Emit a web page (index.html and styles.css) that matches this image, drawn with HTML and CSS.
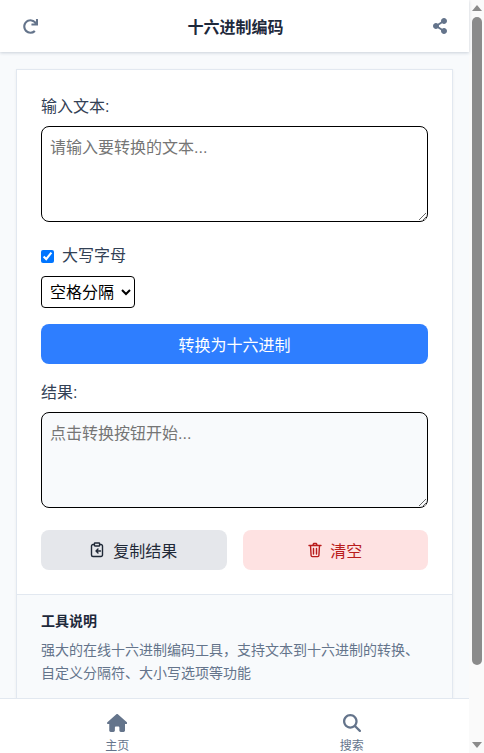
FILE: index.html
```html
<!DOCTYPE html>
<html lang="zh-CN">
<head>
<meta charset="utf-8">
<title>十六进制编码</title>
<link rel="stylesheet" href="styles.css">
</head>
<body>
<div class="page">
  <header class="topbar">
    <svg class="top-icon" viewBox="0 0 512 512"><path d="M500.33 0h-47.41a12 12 0 0 0-12 12.57l4 82.76A247.42 247.42 0 0 0 256 8C119.34 8 7.9 119.53 8 256.19 8.1 393.07 119.1 504 256 504a247.1 247.1 0 0 0 166.18-63.91 12 12 0 0 0 .48-17.43l-34-34a12 12 0 0 0-16.38-.55A176 176 0 1 1 402.1 157.8l-101.53-4.87a12 12 0 0 0-12.57 12v47.41a12 12 0 0 0 12 12h200.33a12 12 0 0 0 12-12V12a12 12 0 0 0-12-12z"/></svg>
    <h1 class="title">十六进制编码</h1>
    <svg class="top-icon share" viewBox="0 0 448 512"><path d="M352 320c-22.608 0-43.387 7.819-59.79 20.895l-102.486-64.054a96.551 96.551 0 0 0 0-41.683l102.486-64.054C308.613 184.181 329.392 192 352 192c53.019 0 96-42.981 96-96S405.019 0 352 0s-96 42.981-96 96c0 7.158.79 14.13 2.276 20.841L155.79 180.895C139.387 167.819 118.608 160 96 160c-53.019 0-96 42.981-96 96s42.981 96 96 96c22.608 0 43.387-7.819 59.79-20.895l102.486 64.054A96.301 96.301 0 0 0 256 416c0 53.019 42.981 96 96 96s96-42.981 96-96-42.981-96-96-96z"/></svg>
  </header>
  <main class="main">
    <section class="card">
      <div class="tool">
        <label class="label" for="input">输入文本:</label>
        <textarea id="input" class="area" placeholder="请输入要转换的文本..."></textarea>
        <label class="check"><input type="checkbox" checked><span>大写字母</span></label>
        <select class="select"><option>空格分隔</option></select>
        <button class="btn primary">转换为十六进制</button>
        <label class="label result-label" for="output">结果:</label>
        <textarea id="output" class="area readonly" readonly placeholder="点击转换按钮开始..."></textarea>
        <div class="actions">
          <button class="btn gray">
            <svg class="btn-icon" viewBox="0 0 14 16"><path d="M4.500 2.500H3a1.500 1.500 0 0 0-1.500 1.500v9A1.500 1.500 0 0 0 3 14.500h8a1.500 1.500 0 0 0 1.500-1.500V4A1.500 1.500 0 0 0 11 2.500H9.500M5 1h4a.6.600 0 0 1 .6.600v1.800a.6.600 0 0 1-.6.600H5a.6.600 0 0 1-.6-.6V1.600A.6.600 0 0 1 5 1ZM10.500 9H6M8 7 6 9l2 2"/></svg>
            <span>复制结果</span>
          </button>
          <button class="btn danger">
            <svg class="btn-icon" viewBox="0 0 14 16"><path d="M1 3.500h12M4.800 3.500l.8-2h2.800l.8 2M2.500 3.500l.6 10a1.200 1.200 0 0 0 1.200 1.100h5.400a1.200 1.200 0 0 0 1.200-1.100l.6-10M5.500 6.500v5.500M8.500 6.500v5.500"/></svg>
            <span>清空</span>
          </button>
        </div>
      </div>
      <div class="about">
        <h2 class="about-title">工具说明</h2>
        <p class="about-text">强大的在线十六进制编码工具，支持文本到十六进制的转换、自定义分隔符、大小写选项等功能</p>
      </div>
    </section>
  </main>
  <nav class="bottom">
    <a class="tab">
      <svg class="tab-icon home" viewBox="0 0 576 512"><path d="M575.8 255.5c0 18-15 32.100-32 32.100h-32l.7 160.200c0 2.700-.2 5.400-.5 8.100V472c0 22.100-17.900 40-40 40H456c-1.100 0-2.200 0-3.300-.1c-1.400 .1-2.800 .1-4.200 .1H416 392c-22.100 0-40-17.900-40-40V448 384c0-17.700-14.300-32-32-32H256c-17.700 0-32 14.300-32 32v64 24c0 22.100-17.900 40-40 40H160 128.100c-1.500 0-3-.1-4.500-.2c-1.200 .1-2.400 .2-3.600 .2H104c-22.100 0-40-17.900-40-40V360c0-.9 0-1.900 .1-2.800V287.600H32c-18 0-32-14-32-32.100c0-9 3-17 10-24L266.400 8c7-7 15-8 22-8s15 2 21 7L564.800 231.500c8 7 12 15 11 24z"/></svg>
      <span>主页</span>
    </a>
    <a class="tab">
      <svg class="tab-icon" viewBox="0 0 512 512"><path d="M416 208c0 45.900-14.900 88.300-40 122.700L502.600 457.400c12.500 12.500 12.500 32.800 0 45.300s-32.800 12.500-45.300 0L330.700 376c-34.400 25.200-76.800 40-122.700 40C93.100 416 0 322.900 0 208S93.100 0 208 0S416 93.100 416 208zM208 352a144 144 0 1 0 0-288 144 144 0 1 0 0 288z"/></svg>
      <span>搜索</span>
    </a>
  </nav>
</div>
<aside class="scrollbar">
  <span class="arrow up"></span>
  <span class="thumb"></span>
  <span class="track"></span>
  <span class="arrow down"></span>
</aside>
</body>
</html>
```
FILE: styles.css
```css
* { box-sizing: border-box; }
html, body { height: 100%; }
body {
  margin: 0;
  display: flex;
  overflow: hidden;
  background: #f8fafc;
  color: #334155;
  font-family: "Liberation Sans", "Noto Sans CJK SC", sans-serif;
  font-size: 16px;
}
.page {
  flex: 1;
  min-width: 0;
  height: 100vh;
  display: flex;
  flex-direction: column;
}
.topbar {
  flex: none;
  height: 52px;
  padding: 0 22px 0 23px;
  display: flex;
  align-items: center;
  justify-content: space-between;
  background: #fff;
  box-shadow: 0 1px 3px rgba(100, 116, 139, 0.3);
  position: relative;
  z-index: 1;
}
.title {
  margin: 0;
  font-size: 16px;
  font-weight: 700;
  color: #1e293b;
}
.top-icon { width: 15px; height: 15px; fill: #64748b; }
.share { width: 14px; height: 16px; }
.main {
  flex: 1;
  min-height: 0;
  overflow: hidden;
  padding: 17px 16px 0;
}
.card {
  background: #fff;
  border: 1px solid #e2e8f0;
  box-shadow: 0 1px 3px rgba(0, 0, 0, 0.06);
}
.tool {
  padding: 24px;
  display: flex;
  flex-direction: column;
}
.label {
  display: block;
  line-height: 26px;
  margin-bottom: 6px;
}
.area {
  display: block;
  width: 100%;
  height: 96px;
  padding: 9px 8px 7px;
  border: 1px solid #000;
  border-radius: 8px;
  background: #fff;
  font: inherit;
  line-height: 24px;
  color: #334155;
}
.area::placeholder { color: #757575; }
.readonly { background: #f8fafc; }
.check {
  display: flex;
  align-items: center;
  gap: 8px;
  margin-top: 22px;
  line-height: 24px;
}
.check input { width: 13px; height: 13px; margin: 0; accent-color: #0075ff; }
.select {
  align-self: flex-start;
  margin-top: 8px;
  width: 94px;
  height: 32px;
  padding: 0 4px;
  border: 1px solid #000;
  border-radius: 4px;
  background: #fff;
  color: #000;
  font: inherit;
}
.btn {
  display: flex;
  align-items: center;
  justify-content: center;
  gap: 8px;
  height: 40px;
  border: 0;
  border-radius: 8px;
  font: inherit;
}
.primary { margin-top: 16px; background: #2e7eff; color: #fff; }
.result-label { margin-top: 16px; }
.actions {
  display: grid;
  grid-template-columns: 1fr 1fr;
  gap: 16px;
  margin-top: 22px;
}
.gray { gap: 9px; background: #e5e7eb; color: #1f2937; }
.danger { background: #fee2e2; color: #b91c1c; }
.btn-icon {
  width: 14px;
  height: 16px;
  fill: none;
  stroke: currentColor;
  stroke-width: 1.400;
  stroke-linecap: round;
  stroke-linejoin: round;
}
.about {
  padding: 16px 24px 24px;
  background: #f8fafc;
  border-top: 1px solid #e2e8f0;
}
.about-title {
  margin: 0 0 7px;
  font-size: 14px;
  line-height: 21px;
  font-weight: 700;
  color: #1e293b;
}
.about-text {
  margin: 0;
  font-size: 14px;
  line-height: 23px;
  color: #64748b;
}
.bottom {
  flex: none;
  height: 55px;
  display: grid;
  grid-template-columns: 1fr 1fr;
  background: #fff;
  border-top: 1px solid #e2e8f0;
  overflow: hidden;
}
.tab {
  display: flex;
  flex-direction: column;
  align-items: center;
  gap: 5px;
  padding-top: 15px;
  font-size: 12px;
  line-height: 18px;
  color: #64748b;
}
.tab-icon { width: 18px; height: 18px; fill: #64748b; flex: none; }
.home { width: 20.250px; }
.scrollbar {
  flex: none;
  width: 15px;
  height: 100vh;
  display: flex;
  flex-direction: column;
  align-items: center;
  background: #fafafa;
}
.arrow {
  flex: none;
  width: 0;
  height: 0;
  border-left: 5px solid transparent;
  border-right: 5px solid transparent;
}
.up { margin: 5px 0 6px; border-bottom: 6px solid #8b8b8b; }
.down { margin: 6px 0 5px; border-top: 6px solid #8b8b8b; }
.thumb {
  flex: none;
  width: 10px;
  height: 648px;
  border-radius: 5px;
  background: #8b8b8b;
}
.track { flex: 1; }
```
